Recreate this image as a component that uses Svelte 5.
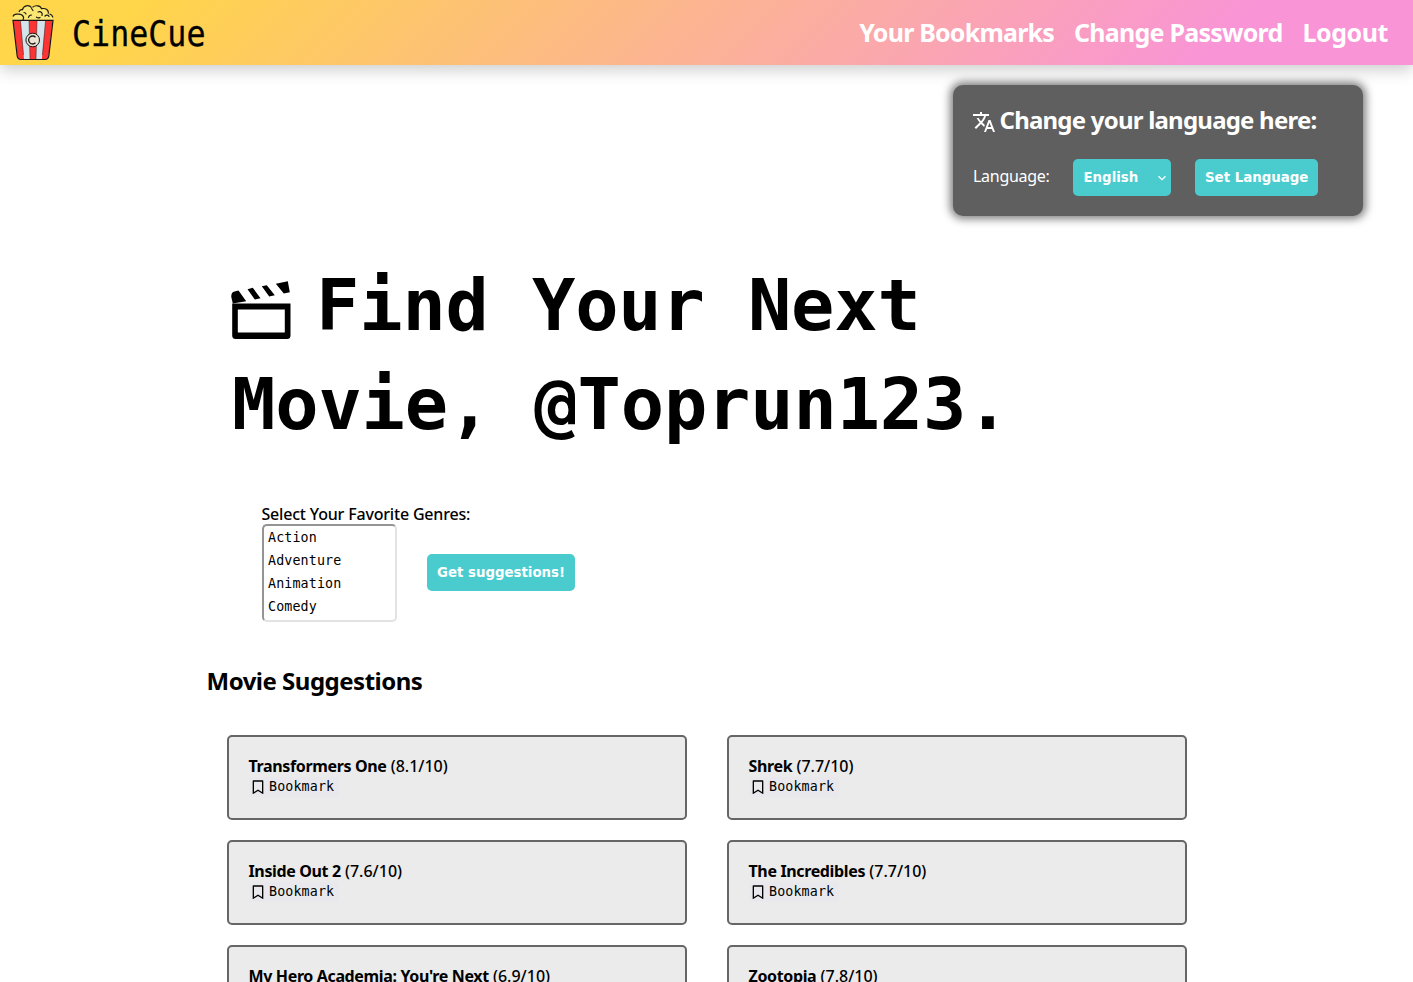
<script>
  const nav = ['Your Bookmarks', 'Change Password', 'Logout'];
  const genres = ['Action', 'Adventure', 'Animation', 'Comedy'];
  const movies = [
    { title: 'Transformers One', score: '8.1' },
    { title: 'Shrek', score: '7.7' },
    { title: 'Inside Out 2', score: '7.6' },
    { title: 'The Incredibles', score: '7.7' },
    { title: "My Hero Academia: You're Next", score: '6.9' },
    { title: 'Zootopia', score: '7.8' }
  ];
</script>

<div class="page">
  <header>
    <a class="brand" href="#home">
      <svg class="logo" viewBox="0 0 42 56" width="42" height="56" aria-hidden="true">
        <path d="M1 15.500C-.5 12 2 8.500 6 9C5.500 5 9 3.500 10.500 4.500C11 0 17-.5 19.500 2.500C22 -.5 28.500 0 29.500 3.500C34 2.500 37 5 36.500 8.500C40 8.500 42 12 40.500 15.500Z" fill="#fbe774" />
        <path d="M1 11.500C1.500 10 3.500 8.800 6 9.200C8.500 9 11 10.500 11.600 12.500Q11.600 14 10.800 15M7 7C7.500 5 9 4.300 10.500 4.700C11.500 .2 17-.4 19.500 2.600M20.500 2.400C23-.2 28.500 .3 29.500 3.700C34 2.800 36.800 5 36.300 8.600M37.500 9C39.500 9.500 40.600 11 40.800 12.500" fill="none" stroke="#1c1a12" stroke-width="1.200" />
        <path d="M12 7.500q1.500 0 2 1.500M19.500 3.500l1.500 2M16.500 12.500c.3-1.500 1.300-2.500 3-2.500M26 7c3-1 5 1 4 3.500M24.500 12.200c1.200.8 2.500.8 3.500.2M33 11c1.500-1.500 3.500-1 4 .5" fill="none" stroke="#1c1a12" stroke-width="1.200" stroke-linecap="round" />
        <path d="M1.500 15.500H40.500L36.500 51Q36 54.500 33 54.500H9Q6 54.500 5.500 51Z" fill="#d5e4eb" />
        <path d="M1.500 15.500H8.500L12 54.500H9Q6 54.500 5.500 51ZM17 15.500H25L24 54.500H18ZM33.500 15.500H40.500L36.500 51Q36 54.500 33 54.500H29.800Z" fill="#fb3434" />
        <path d="M8.500 16L11.500 50M17 16l1 38M25 16l-1 38M33.500 16L30.500 50" stroke="#20262b" stroke-width=".5" fill="none" />
        <path d="M1 15.300H41L36.800 51Q36.300 54.500 33 54.500H9Q5.700 54.500 5.200 51Z" fill="none" stroke="#161313" stroke-width="1.200" />
        <circle cx="20.700" cy="35" r="6.800" fill="#ece4d3" stroke="#181818" stroke-width="1" />
        <path d="M23.500 32.200a4 4 0 1 0 0 5.600" fill="none" stroke="#181818" stroke-width="1.300" />
      </svg>
      <span class="name">CineCue</span>
    </a>
    <nav>
      {#each nav as item, i}
        <a class="n{i}" href="#{i}">{item}</a>
      {/each}
    </nav>
  </header>

  <section class="language">
    <h2>
      <svg viewBox="0 0 24 24" width="24" height="24" fill="currentColor" aria-hidden="true"><path d="M12.870 15.070l-2.540-2.510.03-.03c1.740-1.940 2.980-4.170 3.710-6.530H17V4h-7V2H8v2H1v1.990h11.170C11.500 7.920 10.440 9.750 9 11.350 8.070 10.320 7.300 9.190 6.690 8h-2c.73 1.630 1.730 3.170 2.980 4.560l-5.090 5.020L4 19l5-5 3.110 3.110.76-2.040zM18.500 10h-2L12 22h2l1.120-3h4.750L21 22h2l-4.500-12zm-2.620 7l1.620-4.330L19.120 17h-3.240z" /></svg>
      <span>Change your language here:</span>
    </h2>
    <div class="controls">
      <span class="label">Language:</span>
      <button class="btn select">English
        <svg viewBox="0 0 10 10" width="10" height="10" fill="none" stroke="currentColor" stroke-width="1.300" aria-hidden="true"><path d="M1.500 3.200L5 6.700L8.500 3.200" /></svg>
      </button>
      <button class="btn">Set Language</button>
    </div>
  </section>

  <h1>
    <svg viewBox="0 0 60 60" width="60" height="60" aria-hidden="true">
      <path fill-rule="evenodd" d="M1.200 23.500H59.500V55.500Q59.500 59 56 59H4.700Q1.200 59 1.200 55.500ZM6.800 29.500V52.500H53.800V29.500Z" />
      <path d="M1.800 23.500L.3 17Q0 12.300 3.500 11.500L7.500 10.500L15.200 21.200ZM16.500 9.200L21.800 7.800L29.500 18.200L23.800 19.500ZM30.800 6.200L35.800 5.200L43.800 15.200L38.200 16.500ZM44.800 3.800L56.800 1.200L58.800 12.200L52.800 13.500Z" />
    </svg><span>Find Your Next</span><br /><span>Movie, @Toprun123.</span>
  </h1>

  <form>
    <div class="field">
      <div class="caption"><span>Select Your Favorite Genres:</span></div>
      <div class="list" role="listbox">
        {#each genres as g}
          <div role="option" aria-selected="false">{g}</div>
        {/each}
      </div>
    </div>
    <button type="button" class="btn">Get suggestions!</button>
  </form>

  <section class="suggestions">
    <h2><span>Movie Suggestions</span></h2>
    <div class="grid">
      {#each movies as m}
        <article>
          <div class="title"><b>{m.title}</b> <span>({m.score}/10)</span></div>
          <button class="bookmark">
            <svg viewBox="0 0 24 24" width="16" height="16" fill="currentColor" aria-hidden="true"><path d="M5 2h14a1 1 0 0 1 1 1v19.143a.5.5 0 0 1-.766.424L12 18.030l-7.234 4.536A.5.5 0 0 1 4 22.143V3a1 1 0 0 1 1-1zm13 2H6v15.432l6-3.761 6 3.761V4z" /></svg>
            <span>Bookmark</span>
          </button>
        </article>
      {/each}
    </div>
  </section>
</div>

<style>
  :global(body) { margin: 0; background: #fff; }
  .page {
    height: 100vh; overflow: hidden; color: #000;
    font: 16px/20px "Noto Sans", "Open Sans", sans-serif;
    display: flex; flex-direction: column;
  }
  header {
    height: 65px; flex: none; box-sizing: border-box; padding: 0 25px 0 11.500px;
    display: flex; align-items: center; justify-content: space-between;
    background: linear-gradient(135deg, #ffd54a 10%, #f994d7 86%);
    box-shadow: 0 5px 15px rgba(0, 0, 0, .2);
  }
  a { text-decoration: none; color: inherit; }
  .brand { display: flex; align-items: center; gap: 18.500px; }
  .logo { display: block; }
  .name {
    font: 36px/42px "DejaVu Sans Mono", monospace; display: inline-block;
    transform: scaleX(.88); transform-origin: left; padding-top: 3px;
    -webkit-text-stroke: .3px #000;
  }
  nav { display: flex; gap: 20px; font-size: 25px; line-height: 30px; font-weight: 700; color: #fff; margin-top: -1px; }
  .n0 { letter-spacing: -.8px; }
  .n1 { letter-spacing: -.75px; }
  .n2 { letter-spacing: -.45px; }
  .language {
    flex: none; align-self: flex-end; box-sizing: border-box; width: 410px; height: 131px;
    margin: 20px 50px 0 0; padding: 20px; border-radius: 10px;
    color: #fff; background: #5f5f5f; box-shadow: 0 0 8px 3px rgba(0, 0, 0, .5);
  }
  h2 { margin: 0; font-size: 24px; line-height: 30px; font-weight: 700; white-space: nowrap; }
  .language h2 { display: flex; align-items: center; gap: 3.500px; margin-left: -1px; letter-spacing: -.78px; }
  .language h2 svg { margin-top: 3px; }
  .controls { display: flex; align-items: center; margin-top: 24px; gap: 24px; }
  .label { width: 76px; white-space: nowrap; letter-spacing: -.28px; margin-top: -3px; }
  .btn {
    border: 0; border-radius: 5px; margin: 0; padding: 0 10px; height: 37px; white-space: nowrap;
    background: #4acccf; color: #fff; font: 700 13.330px/16px "DejaVu Sans", sans-serif;
  }
  .select { width: 98px; display: flex; align-items: center; justify-content: space-between; padding: 0 4px 0 10.500px; }
  h1 {
    flex: none; margin: 40px 0 0 232px; white-space: nowrap;
    font: 700 72px/99px "DejaVu Sans Mono", monospace; letter-spacing: -.16px;
  }
  h1 svg { margin-right: 25px; vertical-align: -10px; margin-left: -1px; }
  form { flex: none; margin: 50px 0 0 261px; display: flex; align-items: center; }
  .field { width: 136px; }
  .caption { white-space: nowrap; font-weight: 500; height: 20px; letter-spacing: -.18px; padding-left: .4px; }
  .list {
    box-sizing: border-box; width: 135px; height: 98px; margin-left: 1px; padding: 0 4px;
    border: 2px solid; border-color: #949494 #e2e2e2 #e2e2e2 #949494; border-radius: 5px;
    font: 13.330px/23px "DejaVu Sans Mono", monospace; letter-spacing: .13px;
  }
  form .btn { margin: 19px 0 0 30px; }
  .suggestions { flex: none; width: 1000px; margin: 44px 0 0 206.500px; }
  .suggestions h2 { letter-spacing: -.5px; }
  .grid { display: grid; grid-template-columns: 460px 460px; gap: 20px 40px; margin: 39px 0 0 20.500px; }
  article { box-sizing: border-box; height: 85px; padding: 19px 19.500px; border: 2px solid #666; border-radius: 5px; background: #ebebeb; }
  .title { white-space: nowrap; }
  .title b { letter-spacing: -.36px; }
  .title span { font-weight: 500; letter-spacing: 0; }
  .bookmark {
    display: flex; align-items: center; gap: 3.500px; width: 90px; height: 20px; padding: 0 0 0 1px;
    margin: 1px 0 0; border: 0; background: #e9e9ed; color: #000;
    font: 13.330px/18px "DejaVu Sans Mono", monospace; letter-spacing: .13px;
  }
</style>
